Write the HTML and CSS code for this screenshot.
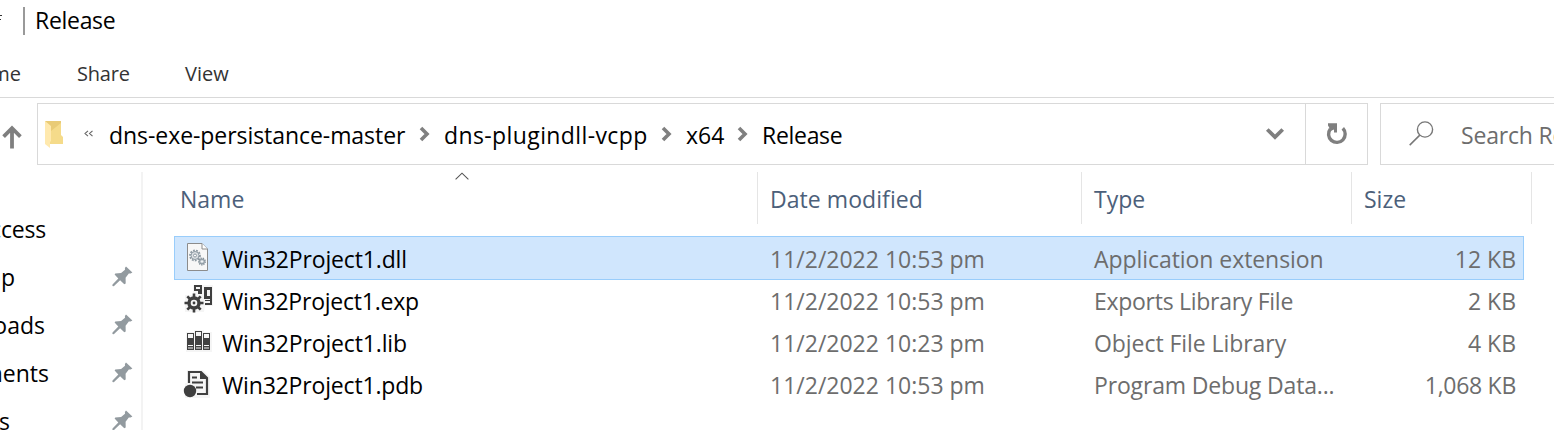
FILE: index.html
```html
<!DOCTYPE html>
<html lang="en">
<head>
<meta charset="utf-8">
<title>Release</title>
<link rel="stylesheet" href="styles.css">
</head>
<body>
<div class="window">
  <header class="titlebar">
    <svg class="customize" width="3" height="12" viewBox="0 0 3 12"><path d="M0 3.5H2M0 7.5H1" stroke="#333" stroke-width="1" fill="none"/></svg>
    <span class="title-sep"></span>
    <span class="title t-title">Release</span>
  </header>
  <nav class="tabs">
    <div class="tab tab-home"><span class="t-home">Home</span></div>
    <span class="tab t-share">Share</span>
    <span class="tab t-view">View</span>
  </nav>
  <div class="addressrow">
    <div class="up"><svg width="22" height="26" viewBox="0 0 22 26"><path d="M12 24.5V5M3.6 12.6L12 4.2L20.4 12.6" fill="none" stroke="#7f7f7f" stroke-width="3.8"/></svg></div>
    <div class="address">
      <svg class="folder" width="20" height="28" viewBox="0 0 20 28"><path d="M0 0H16V14L18 16V23H0Z" fill="#f5db8a"/><path d="M0 0H16V2L6 10Z" fill="#e9cb76"/><path d="M0 0L6 5V20L5 21V27L0 23Z" fill="#ffe9ae"/></svg>
      <svg class="dbl" width="10" height="8" viewBox="0 0 10 8"><path d="M4 .8L1 3.5L4 6.2M8.500 .8L5.500 3.500L8.500 6.200" fill="none" stroke="#666" stroke-width="1.100"/></svg>
      <span class="crumb c1"><span class="t-c1">dns-exe-persistance-master</span></span>
      <svg class="chev" width="12" height="16" viewBox="0 0 12 16"><path d="M2 2L8 8L2 14" fill="none" stroke="#808080" stroke-width="3.6"/></svg>
      <span class="crumb c2"><span class="t-c2">dns-plugindll-vcpp</span></span>
      <svg class="chev" width="12" height="16" viewBox="0 0 12 16"><path d="M2 2L8 8L2 14" fill="none" stroke="#808080" stroke-width="3.6"/></svg>
      <span class="crumb c3"><span class="t-c3">x64</span></span>
      <svg class="chev" width="12" height="16" viewBox="0 0 12 16"><path d="M2 2L8 8L2 14" fill="none" stroke="#808080" stroke-width="3.6"/></svg>
      <span class="crumb c4"><span class="t-title">Release</span></span>
      <div class="drop"><svg width="20" height="14" viewBox="0 0 20 14"><path d="M2.3 2.5L10 10L17.7 2.5" fill="none" stroke="#7f7f7f" stroke-width="3.8"/></svg></div>
      <div class="refresh"><svg width="22" height="24" viewBox="0 0 22 24"><path d="M4.400 6.900A8.300 8.300 0 1 0 16.800 6.300" fill="none" stroke="#7f7f7f" stroke-width="3.400"/><path d="M2 1.300H11V10.600H8V7.400L5 8.700L2 3.600Z" fill="#7f7f7f"/></svg></div>
    </div>
    <div class="search">
      <svg width="26" height="26" viewBox="0 0 26 26"><circle cx="16" cy="8.5" r="7.600" fill="none" stroke="#777" stroke-width="1.4"/><path d="M10.800 14.100L.700 24.100" stroke="#777" stroke-width="1.500"/></svg>
      <span class="t-search">Search Release</span>
    </div>
  </div>
  <div class="main">
    <aside class="sidebar">
      <div class="side"><div class="side-label s1"><span class="t-s1">Quick access</span></div></div>
      <div class="side"><div class="side-label s2"><span>Desktop</span></div><svg class="pin" width="21" height="21" viewBox="0 0 21 21"><path d="M14 .4L20.4 6.6L18.6 7.6L16.8 7.5L13.6 11.7L13.7 17.6L12.3 18.2L8.1 14.3L1.8 20.2L.4 19.9L.5 18.6L6.3 12.6L2.6 8.6L3.3 7.4L9.1 7L13 3.8L12.9 1.9Z" fill="#929a9f"/></svg></div>
      <div class="side"><div class="side-label s3"><span class="t-s3">Downloads</span></div><svg class="pin" width="21" height="21" viewBox="0 0 21 21"><path d="M14 .4L20.4 6.6L18.6 7.6L16.8 7.5L13.6 11.7L13.7 17.6L12.3 18.2L8.1 14.3L1.8 20.2L.4 19.9L.5 18.6L6.3 12.6L2.6 8.6L3.3 7.4L9.1 7L13 3.8L12.9 1.9Z" fill="#929a9f"/></svg></div>
      <div class="side"><div class="side-label s4"><span class="t-s4">Documents</span></div><svg class="pin" width="21" height="21" viewBox="0 0 21 21"><path d="M14 .4L20.4 6.6L18.6 7.6L16.8 7.5L13.6 11.7L13.7 17.6L12.3 18.2L8.1 14.3L1.8 20.2L.4 19.9L.5 18.6L6.3 12.6L2.6 8.6L3.3 7.4L9.1 7L13 3.8L12.9 1.9Z" fill="#929a9f"/></svg></div>
      <div class="side"><div class="side-label s5"><span>Pictures</span></div><svg class="pin" width="21" height="21" viewBox="0 0 21 21"><path d="M14 .4L20.4 6.6L18.6 7.6L16.8 7.5L13.6 11.7L13.7 17.6L12.3 18.2L8.1 14.3L1.8 20.2L.4 19.9L.5 18.6L6.3 12.6L2.6 8.6L3.3 7.4L9.1 7L13 3.8L12.9 1.9Z" fill="#929a9f"/></svg></div>
    </aside>
    <section class="files">
      <div class="thead">
        <div class="th"><span class="t-name">Name</span><svg class="sort" width="14" height="9" viewBox="0 0 14 9"><path d="M.6 7.4L7 1.2L13.4 7.4" fill="none" stroke="#555" stroke-width="1.1"/></svg></div>
        <div class="th"><span class="t-datemod">Date modified</span></div>
        <div class="th"><span class="t-type">Type</span></div>
        <div class="th"><span class="t-size">Size</span></div>
      </div>
      <div class="row selected">
        <svg class="icon" width="32" height="32" viewBox="0 0 32 32"><g transform="translate(0 -1)"><path d="M5.500 2.500H20L25.500 8V29.500H5.500Z" fill="#f7f7f7" stroke="#8c8c8c"/><path d="M20 2.500V8H25.500" fill="#fff" stroke="#8c8c8c"/><circle cx="13" cy="14.500" r="5" fill="none" stroke="#8e9aa3" stroke-width="1.800" stroke-dasharray="1.800 1.200"/><circle cx="13" cy="14.500" r="4" fill="#dde1e4" stroke="#8e9aa3"/><circle cx="13" cy="14.500" r="1.500" fill="#fff" stroke="#8e9aa3"/><circle cx="20" cy="20.500" r="3.200" fill="none" stroke="#84919b" stroke-width="1.600" stroke-dasharray="1.300 .9"/><circle cx="20" cy="20.500" r="2.400" fill="#cbd2d6" stroke="#84919b"/><circle cx="20" cy="20.500" r=".8" fill="#fff"/></g></svg>
        <span class="fname t-dll">Win32Project1.dll</span><span class="date t-date">11/2/2022 10:53 pm</span><span class="type t-ty1">Application extension</span><span class="size t-sz">12 KB</span>
      </div>
      <div class="row">
        <svg class="icon" width="32" height="32" viewBox="0 0 32 32"><path d="M11 0H31V21H23L22 27H3V10H11Z" fill="#f5f5f5"/><path fill="#3f3f3f" d="M12 0H20V9H16V6H12ZM22 2H30V20H23V18H28V16H23V14H22Z"/><path fill="#f5f5f5" d="M14 2H18V4H14ZM25 5H28V11H25ZM23 14H28V15H23Z"/><circle cx="12" cy="18" r="5" fill="none" stroke="#3f3f3f" stroke-width="3.400"/><circle cx="12" cy="18" r="1.400" fill="#3f3f3f"/><path d="M12 8.500V12M12 24V27.500M2.500 18H6M18 18H21.500M5.300 11.300L8 14M16 22L18.700 24.700M18.700 11.300L16 14M8 22L5.300 24.700" stroke="#3f3f3f" stroke-width="2.600"/></svg>
        <span class="fname t-exp">Win32Project1.exp</span><span class="date t-date">11/2/2022 10:53 pm</span><span class="type t-ty2">Exports Library File</span><span class="size t-sz">2 KB</span>
      </div>
      <div class="row">
        <svg class="icon" width="32" height="32" viewBox="0 0 32 32"><g transform="translate(0 1)"><path d="M4 4H12V2H22V4H30V24H4Z" fill="#f5f5f5"/><path fill="#414141" fill-rule="evenodd" d="M5 5H12V22H5ZM6 6V10H11V6ZM6 17V18H11V17ZM6 19.500V20.500H11V19.500ZM13 3H20V22H13ZM14 4V8H19V4ZM14 17V18H19V17ZM14 19.500V20.500H19V19.500ZM21 5H28V22H21ZM22 6V10H27V6ZM22 17V18H27V17ZM22 19.500V20.500H27V19.500Z"/></g></svg>
        <span class="fname t-lib">Win32Project1.lib</span><span class="date t-date">11/2/2022 10:23 pm</span><span class="type t-ty3">Object File Library</span><span class="size t-sz">4 KB</span>
      </div>
      <div class="row">
        <svg class="icon" width="32" height="32" viewBox="0 0 32 32"><path d="M5 1H21L28 8V29H3V14H5Z" fill="#f5f5f5"/><path d="M7 14V3H19L25 9V25H15" fill="none" stroke="#3f3f3f" stroke-width="2.200"/><path d="M18 2L26 10H18Z" fill="#3f3f3f"/><path d="M10 8.500H15M10 13.500H21M14 18.500H21" stroke="#3f3f3f" stroke-width="2"/><circle cx="8" cy="22" r="6.200" fill="#3f3f3f"/></svg>
        <span class="fname t-pdb">Win32Project1.pdb</span><span class="date t-date">11/2/2022 10:53 pm</span><span class="type t-ty4">Program Debug Data...</span><span class="size t-sz t-long">1,068 KB</span>
      </div>
    </section>
  </div>
</div>
</body>
</html>
```
FILE: styles.css
```css
* { box-sizing: border-box; }
body { margin: 0; background: #fff; font-family: "Open Sans", "Noto Sans", sans-serif; font-size: 23px; line-height: 32px; color: #000; }
svg { display: block; flex: none; }
.window { width: 1554px; height: 430px; overflow: hidden; white-space: nowrap; }
.titlebar { height: 42px; display: flex; align-items: center; }
.customize { margin-top: -6px; }
.title { padding-bottom: 2px; }
.title-sep { width: 2px; height: 28px; background: #999; margin: 0 10px 0 20px; }
.tabs { height: 56px; border-bottom: 1px solid #d9d9d9; display: flex; padding-top: 16px; font-size: 20px; color: #333; }
.tab-home { width: 21px; display: flex; justify-content: flex-end; margin-right: 56px; }
.t-share { width: 52px; margin-right: 56px; }
.addressrow { height: 74px; padding-top: 5px; display: flex; align-items: flex-start; }
.up { width: 37px; height: 62px; display: flex; align-items: center; padding-top: 5px; }
.address { width: 1331px; height: 62px; border: 1px solid #d9d9d9; display: flex; align-items: center; padding-left: 7px; }
.folder { margin-right: 19px; margin-top: 1px; }
.dbl { margin-right: 15px; margin-top: -1px; }
.crumb { flex: none; padding-top: 1px; }
.c1 { width: 310px; }
.c2 { width: 205px; margin-left: 13px; }
.c3 { width: 40px; margin-left: 13px; }
.c2 + .chev { margin-left: 12px; }
.c3 + .chev { margin-left: 11px; }
.c4 { margin-left: 13px; }
.drop { margin-left: auto; width: 40px; }
.refresh { width: 62px; height: 60px; border-left: 1px solid #d9d9d9; display: flex; align-items: center; justify-content: center; }
.search { margin-left: 12px; width: 174px; height: 62px; border: 1px solid #d9d9d9; border-right: 0; display: flex; align-items: center; gap: 26px; padding-left: 28px; color: #6d6d6d; overflow: hidden; flex: none; }
.t-search { padding-top: 2px; letter-spacing: -.2px; }
.t-title { letter-spacing: -.3px; }
.t-share { letter-spacing: -.2px; }
.t-c1 { letter-spacing: -.06px; }
.t-c2 { letter-spacing: .39px; }
.main { display: flex; height: 258px; }
.sidebar { width: 143px; border-right: 2px solid #f3f3f3; padding-top: 35px; flex: none; }
.side { height: 48px; display: flex; align-items: flex-start; justify-content: space-between; padding-right: 8px; }
.side-label { padding-top: 6px; display: flex; justify-content: flex-end; flex: none; }
.s1 { width: 46px; letter-spacing: -.2px; }
.s2 { width: 15px; }
.s3 { width: 45px; }
.s4 { width: 49px; }
.s5 { width: 10px; }
.pin { margin-top: 11px; }
.files { width: 1389px; padding-left: 31px; }
.thead { height: 52px; margin-bottom: 12px; display: grid; grid-template-columns: 584px 324px 270px 180px; color: #4c607a; }
.th { border-right: 1px solid #e5e5e5; padding: 11px 0 0 12px; position: relative; }
.th:first-child { padding-left: 6px; }
.t-datemod { letter-spacing: .06px; }
.sort { position: absolute; left: 281px; top: 0; }
.row { width: 1350px; height: 42px; display: grid; grid-template-columns: 48px 548px 324px 270px 152px; align-items: center; color: #6d6d6d; }
.selected { height: 44px; background: #d0e6fd; border: 1px solid #99cdfb; }
.selected span { padding-top: 2px; margin-left: -1px; }
.icon { margin-left: 8px; }
.selected .icon { margin-left: 7px; }
.fname { color: #000; }
.t-dll, .t-lib { letter-spacing: -.14px; }
.t-exp { letter-spacing: -.22px; }
.t-pdb { letter-spacing: -.17px; }
.t-ty1 { letter-spacing: -.06px; }
.t-ty2 { letter-spacing: -.28px; }
.t-ty3 { letter-spacing: -.06px; }
.t-ty4 { letter-spacing: -.16px; }
.size { text-align: right; }
.selected .size { margin-right: 1px; }
.t-long { letter-spacing: -.28px; }
```
